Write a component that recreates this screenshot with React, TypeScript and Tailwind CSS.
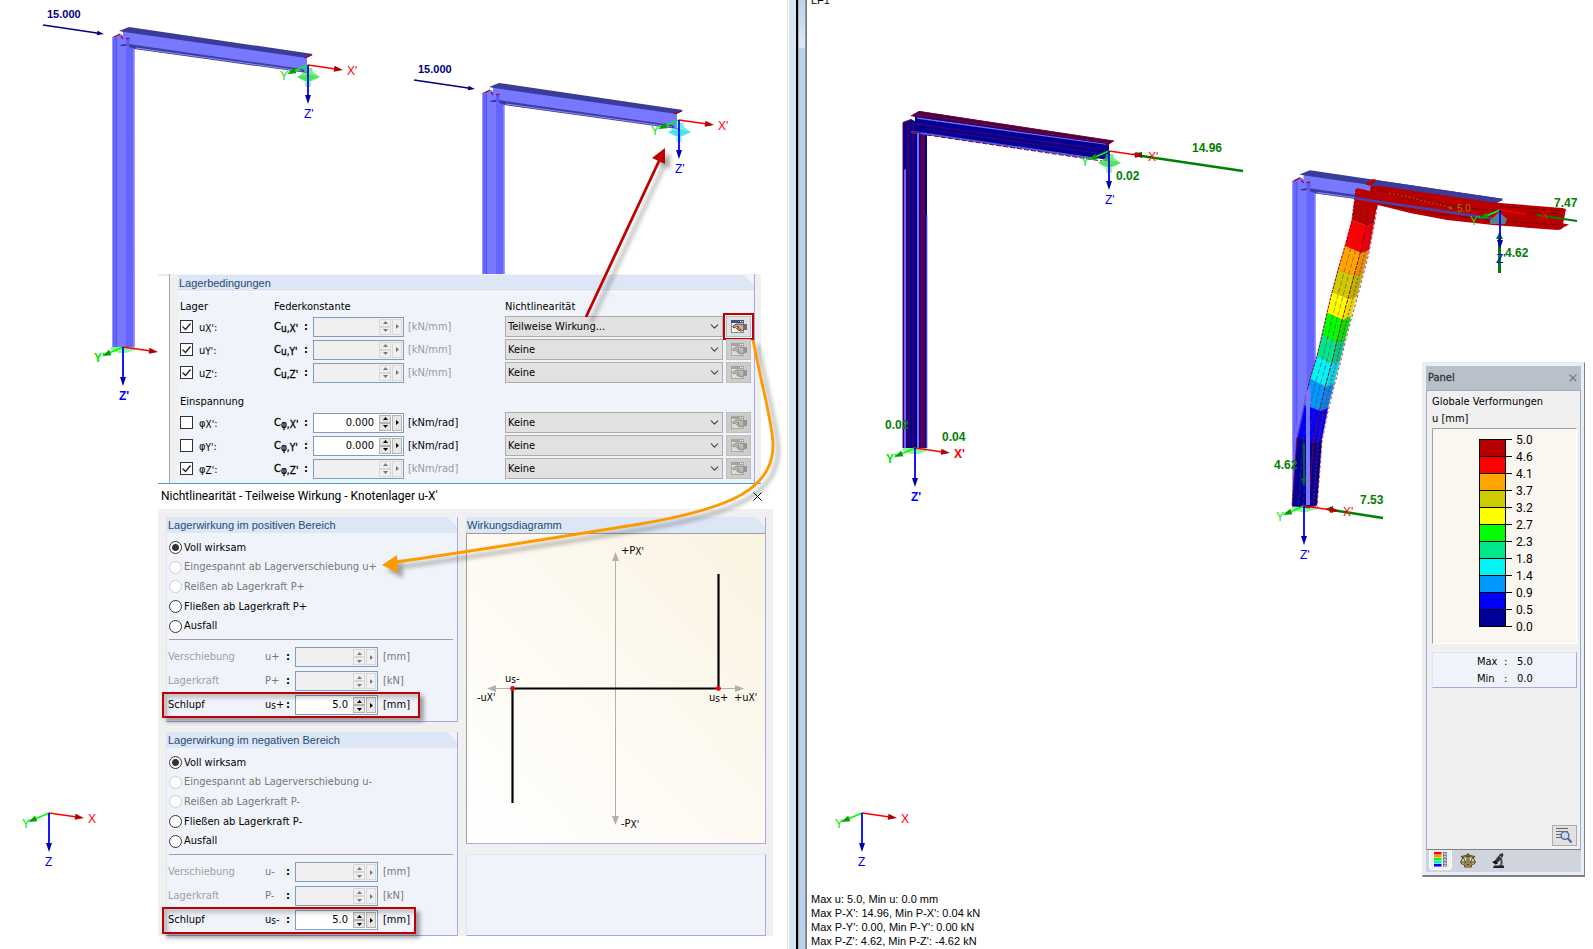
import React from 'react';
import { ChevronDown, X } from 'lucide-react';

const UI = "font-['DejaVu_Sans_Condensed','DejaVu_Sans',sans-serif]";
const ARIAL = "font-['Liberation_Sans',Arial,sans-serif]";

/* ---------- 3D scene parts ---------- */

function Arrow({ x, y, color, head, width = 1.6, size = 8 }: { x: number; y: number; color: string; head?: string; width?: number; size?: number }) {
  const len = Math.hypot(x, y);
  const ux = x / len;
  const uy = y / len;
  const bx = x - ux * size;
  const by = y - uy * size;
  const w = size * 0.33;
  return (
    <g>
      <line x1={0} y1={0} x2={bx} y2={by} stroke={color} strokeWidth={width} />
      <polygon points={`${x},${y} ${bx - uy * w},${by + ux * w} ${bx + uy * w},${by - ux * w}`} fill={head ?? color} />
    </g>
  );
}

type TriadProps = { x: number; y: number; prime?: boolean; hideX?: boolean; bold?: boolean; xDx?: number; xDy?: number; yDx?: number; yDy?: number };

function Triad({ x, y, prime = true, hideX, bold, xDx = 39, xDy = 10, yDx = -29, yDy = 15 }: TriadProps) {
  const p = prime ? "'" : '';
  const weight = bold ? 700 : 400;
  return (
    <g transform={`translate(${x} ${y})`} fontFamily="Liberation Sans, Arial, sans-serif" fontSize={12} fontWeight={weight}>
      <Arrow x={-21} y={9} color="#00ff00" head="#00a000" width={1.8} size={9} />
      <Arrow x={35} y={5} color="#ff0000" head="#b00000" width={1.6} size={9} />
      <Arrow x={0} y={39} color="#0000ff" head="#0000aa" width={1.8} size={9} />
      {!hideX && <text x={xDx} y={xDy} fill="#ff0000">X{p}</text>}
      <text x={yDx} y={yDy} fill="#00e600">Y{p}</text>
      <text x={-4} y={53} fill="#0000ff">Z{p}</text>
    </g>
  );
}

function Support({ x, y, color = '#33e04a' }: { x: number; y: number; color?: string }) {
  return (
    <g transform={`translate(${x} ${y})`} fill={color}>
      <polygon points="-3,3 4,3 5,7 12,12 4,16 -4,16 -11,12 -4,7" opacity={0.65} />
      <polygon points="-11,12 0,9 12,12 3,15 -4,15" opacity={0.6} />
      <rect x={-3} y={14} width={6} height={8} opacity={0.45} />
    </g>
  );
}

function BaseSupport({ x, y }: { x: number; y: number }) {
  return <polygon transform={`translate(${x} ${y})`} points="-12,0 12,0 12,3 3,6 -4,6 -12,3" fill="#66f07a" opacity={0.75} />;
}

function Frame({ x, y, scale = 1 }: { x: number; y: number; scale?: number }) {
  return (
    <g transform={`translate(${x} ${y}) scale(${scale})`}>
      <polygon points="0,37 9,34 14,38 22,43 22.5,347 0,347" fill="#7777ff" />
      <rect x={0} y={38} width={5} height={309} fill="#6666ff" />
      <rect x={14} y={45} width={8.5} height={302} fill="#6464ff" />
      <line x1={4.5} x2={4.5} y1={38} y2={347} stroke="#5555ee" />
      <line x1={0.5} x2={0.5} y1={38} y2={347} stroke="#9a9aff" />
      <line x1={22} x2={22} y1={48} y2={347} stroke="#a0a0ff" />
      <polygon points="11,31 195,57 195,72 23,49 17,46 11,46" fill="#7777ff" />
      <polygon points="17,44 23,45 190,69 195,73 23,49 17,47" fill="#3d3d9b" />
      <polyline points="24,48 190,71" stroke="#8c8cff" strokeWidth={1} fill="none" />
      <polygon points="7,31 17,27 201,54 195,58 12,32" fill="#3b3b99" />
      <polygon points="8,45 14,44 14,46 9,46" fill="#33338a" />
      <polygon points="14,39 18,38 17,46 14,46" fill="#5c5cf0" />
      <path d="M2 37 L8 34 M9 36 L11 39 M14 39 L17 38 M192 58 L200 55 M193 72 L196 73" stroke="#a00018" strokeWidth={1.3} fill="none" />
    </g>
  );
}

function LoadArrow({ x, y }: { x: number; y: number }) {
  return (
    <g transform={`translate(${x} ${y})`}>
      <Arrow x={61} y={9} color="#000080" width={1.6} size={7} />
      <text x={4} y={-7} fill="#000080" fontFamily="Liberation Sans, Arial, sans-serif" fontWeight={700} fontSize={11}>15.000</text>
    </g>
  );
}

function LeftScene() {
  return (
    <svg className="absolute left-0 top-0" width={787} height={949} viewBox="0 0 787 949">
      <LoadArrow x={43} y={25} />
      <BaseSupport x={123} y={347} />
      <Frame x={112} y={0} />
      <Support x={308} y={65} />
      <Triad x={308} y={65} yDx={-28} />
      <Triad x={123} y={347} bold hideX />
      <LoadArrow x={414} y={80} />
      <Frame x={482} y={56} />
      <Support x={679} y={120} color="#2ee0e6" />
      <Triad x={679} y={120} yDx={-28} />
      <Triad x={49} y={813} prime={false} yDx={-27} />
    </svg>
  );
}

const BANDS = ['#b90000', '#ff0000', '#ffa500', '#cccc00', '#ffff00', '#00ff00', '#00e68a', '#00f5f5', '#0099ff', '#0000ff', '#000099'];
const LEFT_EDGE = [[1356, 189], [1352, 220], [1345, 246], [1338, 270], [1332, 292], [1327, 313], [1322, 335], [1317, 356], [1310, 379], [1304, 405], [1297, 437], [1292, 506]];
const RIGHT_EDGE = [[1378, 202], [1374, 226], [1369, 253], [1363, 276], [1357, 299], [1351, 320], [1345, 343], [1340, 364], [1334, 387], [1328, 411], [1322, 442], [1317, 508]];

function edgeLine(t: number) {
  return LEFT_EDGE.map(([lx, ly], i) => {
    const [rx, ry] = RIGHT_EDGE[i];
    return `${lx + (rx - lx) * t},${ly + (ry - ly) * t}`;
  }).join(' ');
}

function DeformedFrame() {
  return (
    <g>
      {BANDS.map((color, i) => {
        const [ax, ay] = LEFT_EDGE[i];
        const [bx, by] = RIGHT_EDGE[i];
        const [cx, cy] = RIGHT_EDGE[i + 1];
        const [dx, dy] = LEFT_EDGE[i + 1];
        const m = ax + (bx - ax) * 0.68;
        const n = dx + (cx - dx) * 0.68;
        return (
          <g key={color}>
            <polygon points={`${ax},${ay} ${m},${by} ${bx},${by - 3} ${cx},${cy - 3} ${n},${cy} ${dx},${dy}`} fill={color} />
            <polygon points={`${m},${by} ${bx},${by - 3} ${cx},${cy - 3} ${n},${cy}`} fill="#500050" opacity={i === 0 ? 0 : 0.15} />
            <polyline points={`${dx},${dy} ${n},${cy} ${cx},${cy - 3}`} fill="none" stroke="#600000" strokeWidth={0.6} opacity={0.6} />
          </g>
        );
      })}
      <polyline points={edgeLine(0)} fill="none" stroke="#900020" strokeWidth={1} strokeDasharray="3 1" />
      <polyline points={edgeLine(0.25)} fill="none" stroke="#703040" strokeWidth={0.5} strokeDasharray="5 2" />
      <polyline points={edgeLine(0.45)} fill="none" stroke="#703040" strokeWidth={0.5} strokeDasharray="5 2" />
      <polyline points={edgeLine(0.66)} fill="none" stroke="#900020" strokeWidth={1} strokeDasharray="4 1" />
      <polyline points={edgeLine(0.84)} fill="none" stroke="#703050" strokeWidth={0.8} strokeDasharray="2 2" />
      <polyline points={edgeLine(1)} fill="none" stroke="#900020" strokeWidth={0.7} strokeDasharray="3 2" />
      <polygon points="1292,440 1304,400 1311,386 1311,404 1305,405 1298,437" fill="#7777ff" opacity={0.5} />
      <polygon points="1306,392 1310,386 1310,505 1306,505" fill="#7777ff" />
      <polygon points="1357,188 1370,191 1371,184 1500,203 1562,208 1566,209 1562,229 1557,230 1493,225 1447,220 1410,213 1378,205 1376,210 1355,206" fill="#b90000" />
      <path d="M1371 187 C1420 204 1470 211 1562 214 M1500 206 L1562 211 M1376 202 C1410 212 1470 219 1560 225" stroke="#7d0000" strokeWidth={1} fill="none" />
      <polygon points="1370,186 1376,180 1503,199 1497,203 1380,186" fill="#3b3b99" />
      <polygon points="1365,184 1373,179 1377,180 1370,186" fill="#c00000" />
      <polyline points="1354,198 1380,202 1496,219" stroke="#4c3fa8" strokeWidth={2.6} fill="none" />
      <path d="M1389 193 L1450 207" stroke="#a07000" strokeWidth={1} strokeDasharray="2 2" />
      <path d="M1448 208 l4 -2 v4z" fill="#608000" />
      <text x={1457} y={212} fill="#9a8000" fontFamily="Liberation Sans, Arial, sans-serif" fontSize={10}>5.0</text>
      <polyline points="1562,208 1561,217 1561,224 1566,225 1558,229" fill="none" stroke="#b90000" strokeWidth={2} />
    </g>
  );
}

function ResultFrame() {
  return (
    <g>
      <polygon points="903,122 911,119 918,123 927,130 927,448 903,448" fill="#000099" />
      <polygon points="904,170 907,168 906,448 904,448" fill="#6666ff" />
      <rect x={906} y={125} width={2} height={323} fill="#2a007a" />
      <rect x={917} y={125} width={2} height={323} fill="#6f6fff" />
      <rect x={921} y={126} width={4} height={322} fill="#5c0050" />
      <path d="M903 123 V448 M909 120 V446 M913 122 V448 M920 124 V448" stroke="#660040" strokeWidth={1} />
      <path d="M927 215 V448" stroke="#7777ff" strokeWidth={1} />
      <polygon points="915,116 1109,143 1109,160 927,134 915,131" fill="#000099" />
      <path d="M917 118 L1106 144" stroke="#6f6fff" strokeWidth={1.6} />
      <path d="M916 124 L1106 150 M925 129 L1104 154" stroke="#4c0060" strokeWidth={1} />
      <path d="M911 132 L927 134 L1090 158" stroke="#5a5ae0" strokeWidth={2} fill="none" />
      <path d="M927 135 L1102 161" stroke="#700030" strokeWidth={1} strokeDasharray="5 2" />
      <polygon points="911,116 919,111 1114,141 1107,144 915,117" fill="#3a0058" />
      <path d="M911 116 L919 111.5 L1114 141 M916 114 L1110 143" stroke="#80002c" strokeWidth={1} fill="none" />
      <path d="M1106 146 L1113 141 M1103 160 L1110 161 M911 132 L921 133" stroke="#900018" strokeWidth={1.2} />
      <path d="M918 124 H922 M903 124 L911 120" stroke="#900018" strokeWidth={1} />
    </g>
  );
}

function RightScene() {
  return (
    <svg className="absolute left-0 top-0" width={786} height={949} viewBox="807 0 786 949">
      <text x={811} y={4} fontFamily="Liberation Sans, Arial, sans-serif" fontSize={11}>LF1</text>
      <BaseSupport x={915} y={448} />
      <ResultFrame />
      <Support x={1109} y={151} />
      <line x1={1135} y1={155} x2={1243} y2={171} stroke="#008000" strokeWidth={2.4} />
      <polygon points="1131,154 1142,152 1142,158" fill="#006000" />
      <Triad x={1109} y={151} yDx={-28} />
      <Triad x={915} y={448} bold />
      <BaseSupport x={1304} y={506} />
      <Frame x={1292} y={142} scale={1.05} />
      <DeformedFrame />
      <polygon points="1499,212 1507,219 1505,224 1490,224 1490,220" fill="#5f7f86" />
      <path d="M1537 215 L1577 221" stroke="#008000" strokeWidth={2.2} />
      <path d="M1304 443 V483" stroke="#006838" strokeWidth={1.8} />
      <polygon points="1304,487 1301,478 1306,478" fill="#006838" />
      <line x1={1332} y1={510} x2={1383} y2={518} stroke="#008000" strokeWidth={2.4} />
      <polygon points="1325,509 1333,506 1333,513" fill="#006000" />
      <path d="M1499.500 238 V273" stroke="#008000" strokeWidth={3} />
      <polygon points="1499.500,232 1496,239 1503,239" fill="#008000" />
      <Triad x={1500} y={210} xDx={40} yDx={-30} />
      <Triad x={1304} y={506} yDx={-28} />
      <Triad x={862} y={813} prime={false} yDx={-27} />
      <g fill="#008000" fontFamily="Liberation Sans, Arial, sans-serif" fontWeight={700} fontSize={12}>
        <text x={1192} y={152}>14.96</text>
        <text x={1116} y={180}>0.02</text>
        <text x={885} y={429}>0.02</text>
        <text x={942} y={441}>0.04</text>
        <text x={1554} y={207}>7.47</text>
        <text x={1505} y={257}>4.62</text>
        <text x={1274} y={469}>4.62</text>
        <text x={1360} y={504}>7.53</text>
      </g>
    </svg>
  );
}

/* ---------- form controls ---------- */

function Sym({ base, sub, tail = '' }: { base: string; sub: string; tail?: string }) {
  return <span>{base}<span className="align-[-1px] text-[10px] leading-none">{sub}</span>{tail}</span>;
}

function Spinner({ value = '', disabled, label, className }: { value?: string; disabled?: boolean; label: string; className: string }) {
  const tone = disabled ? 'fill-[#777]' : 'fill-black';
  const btn = disabled ? 'bg-[#f0f0f0] border-[#d8d8d8]' : 'bg-[#e6e6e6] border-[#b4b4b4]';
  return (
    <div className={`flex h-5 gap-px border border-[#7f9db9] p-px ${disabled ? 'bg-[#f0f0f0]' : 'bg-white'} ${className}`}>
      <input aria-label={label} defaultValue={value} disabled={disabled} className="w-0 min-w-0 flex-1 bg-transparent pr-1 text-right outline-none" />
      <div className="flex w-3 flex-col">
        <button type="button" disabled={disabled} aria-label={`${label} +`} className={`grid flex-1 place-items-center border ${btn}`}>
          <svg width={5} height={3} className={tone}><path d="M2.500 0 L5 3 H0z" /></svg>
        </button>
        <button type="button" disabled={disabled} aria-label={`${label} -`} className={`grid flex-1 place-items-center border ${btn}`}>
          <svg width={5} height={3} className={tone}><path d="M0 0 H5 L2.500 3z" /></svg>
        </button>
      </div>
      <button type="button" disabled={disabled} aria-label={`${label} …`} className={`grid w-[10px] place-items-center border ${btn}`}>
        <svg width={3} height={5} className={tone}><path d="M0 0 L3 2.500 L0 5z" /></svg>
      </button>
    </div>
  );
}

function EditIcon({ active }: { active?: boolean }) {
  const bar = active ? '#3b5488' : '#a4a59f';
  const hand = active ? '#dba880' : '#b9bab2';
  const line = active ? '#40342e' : '#85867f';
  return (
    <svg width={16} height={14} viewBox="0 0 16 14">
      <rect x={0.5} y={0.5} width={12} height={12} fill={active ? '#f4f4f4' : '#dcddd6'} stroke={active ? '#888' : '#a9aaa4'} />
      <rect x={0} y={0} width={13} height={3} fill={bar} />
      <rect x={9} y={1} width={1} height={1} fill="#fff" />
      <rect x={11} y={1} width={1} height={1} fill="#fff" />
      <path d="M1.500 6.500 L5 4 H9 L13 4.500 V9.500 L10.500 11 L7 10 L5.500 8.500 L8 7 L5.500 6.500 L3 8z" fill={hand} stroke={line} strokeWidth={0.9} />
      <path d="M7.500 8.500 L10 9.500" stroke={line} strokeWidth={0.7} />
      <rect x={12.5} y={4} width={3.500} height={6} fill={active ? '#66707f' : '#94958e'} />
    </svg>
  );
}

type RowProps = { base: string; axis: string; checked: boolean; value?: string; unit: string; effect: string; active?: boolean };

function ConditionRow({ base, axis, checked, value, unit, effect, active }: RowProps) {
  const id = `${base}${axis}`;
  const off = value === undefined;
  return (
    <div className="flex h-[23px] items-center">
      <label className="flex w-[94px] items-center gap-[6px]">
        <span className="grid">
          <input type="checkbox" defaultChecked={checked} className="peer size-[13px] appearance-none border border-[#333] bg-white [grid-area:1/1]" />
          <svg width={13} height={13} className="pointer-events-none opacity-0 [grid-area:1/1] peer-checked:opacity-100"><path d="M2.500 6.500 L5.500 9.500 L10.500 3.500" fill="none" stroke="#222" strokeWidth={1.3} /></svg>
        </span>
        <span className="pt-[2px]"><Sym base={base} sub={`${axis}'`} tail=":" /></span>
      </label>
      <span className="flex w-[39px] pr-[5px] font-bold">
        <span className="font-normal [-webkit-text-stroke:0.3px]">C<span className="align-[-2px] text-[10px] leading-none">{base},{axis}'</span></span>
        <span className="ml-auto">:</span>
      </span>
      <Spinner label={`C ${id}`} value={value} disabled={off} className="w-[91px]" />
      <span className={`w-[101px] pl-[4px] ${off ? 'text-[#9a9a9a]' : ''}`}>{unit}</span>
      <div className="relative min-w-0 flex-1">
        <select aria-label={`Nichtlinearität ${id}`} defaultValue={effect} className="block h-[21px] w-full appearance-none border border-[#adadad] bg-[#e1e1e1] pl-[2px]">
          <option>{effect}</option>
        </select>
        <ChevronDown className="pointer-events-none absolute right-[2px] top-[4px] size-[13px]" strokeWidth={2} color="#444" />
      </div>
      <button type="button" aria-label={`Bearbeiten ${id}`} className={`ml-[3px] mr-[3px] grid h-[21px] w-[25px] place-items-center border border-[#bfbfbf] ${active ? 'bg-[#e1e1e1] outline-2 outline-offset-[1px] outline-[#c00000]' : 'bg-[#ccc]'}`}>
        <EditIcon active={active} />
      </button>
    </div>
  );
}

function GroupTitle({ children }: { children: React.ReactNode }) {
  return (
    <h2 className={`${ARIAL} flex h-4 items-center bg-[#dce6f5] pl-px text-[11px] text-[#264a73] [clip-path:polygon(0_0,calc(100%-10px)_0,100%_10px,100%_100%,0_100%)]`}>{children}</h2>
  );
}

function SupportConditions() {
  return (
    <section className={`${UI} flex h-[210px] border-b border-[#3aa0e0] bg-white text-[11px] leading-[14px]`}>
      <div className="w-[11px] border-t-2 border-[#e8ebf0]" />
      <div className="flex flex-1 border-l border-[#a8a8a8] bg-[#f0f0f0] pl-2 pr-[6px]">
        <div className="flex-1 border-r border-[#a9a7e8] bg-[#f0f4fa] pt-px">
          <GroupTitle>Lagerbedingungen</GroupTitle>
          <div className="border-t border-white pl-[2px]">
            <div className="flex h-[23px] items-end pb-px">
              <span className="w-[94px]">Lager</span>
              <span className="w-[231px]">Federkonstante</span>
              <span>Nichtlinearität</span>
            </div>
            <ConditionRow base="u" axis="X" checked unit="[kN/mm]" effect="Teilweise Wirkung..." active />
            <ConditionRow base="u" axis="Y" checked unit="[kN/mm]" effect="Keine" />
            <ConditionRow base="u" axis="Z" checked unit="[kN/mm]" effect="Keine" />
            <div className="flex h-[27px] items-end pb-[2px]">Einspannung</div>
            <ConditionRow base="φ" axis="X" checked={false} value="0.000" unit="[kNm/rad]" effect="Keine" />
            <ConditionRow base="φ" axis="Y" checked={false} value="0.000" unit="[kNm/rad]" effect="Keine" />
            <ConditionRow base="φ" axis="Z" checked unit="[kNm/rad]" effect="Keine" />
          </div>
        </div>
      </div>
    </section>
  );
}

function RangeGroup({ title, sign, name, className, mark }: { title: string; sign: string; name: string; className: string; mark: string }) {
  const options: [string, boolean][] = [
    ['Voll wirksam', false],
    [`Eingespannt ab Lagerverschiebung u${sign}`, true],
    [`Reißen ab Lagerkraft P${sign}`, true],
    [`Fließen ab Lagerkraft P${sign}`, false],
    ['Ausfall', false],
  ];
  return (
    <fieldset className={`border-b border-r border-l border-b-[#a9a7e8] border-l-[#dce6f5] border-r-[#a9a7e8] bg-[#f0f4fa] ${className}`}>
      <GroupTitle>{title}</GroupTitle>
      <div className="mt-[5px] grid h-[98px] auto-rows-fr pl-[2px]">
        {options.map(([text, off], i) => (
          <label key={text} className={`flex items-center gap-[2px] ${off ? 'text-[#777]' : ''}`}>
            <input type="radio" name={name} disabled={off} defaultChecked={i === 0} className="size-[13px] appearance-none rounded-full border border-[#333] bg-white checked:bg-[radial-gradient(circle,#333_3px,white_4px)] disabled:border-[#ccc]" />
            {text}
          </label>
        ))}
      </div>
      <div className="mb-[5px] ml-[2px] mr-1 mt-[3px] h-px bg-[#a0a0a0]" />
      <ValueRow label="Verschiebung" symbol={<>u{sign}</>} unit="[mm]" />
      <ValueRow label="Lagerkraft" symbol={<>P{sign}</>} unit="[kN]" />
      <ValueRow label="Schlupf" symbol={<Sym base="u" sub="s" tail={sign} />} unit="[mm]" value="5.0" mark={mark} />
    </fieldset>
  );
}

function ValueRow({ label, symbol, unit, value, mark }: { label: string; symbol: React.ReactNode; unit: string; value?: string; mark?: string }) {
  const off = value === undefined;
  return (
    <div className={`relative flex h-6 items-center pl-[1px] ${off ? 'text-[#a0a0a0]' : ''}`}>
      <span className="w-[97px]">{label}</span>
      <span className={`flex w-[30px] pr-[5px] ${off ? 'text-[#777]' : ''}`}>{symbol}<span className="ml-auto font-bold text-black">:</span></span>
      <Spinner label={label} value={value} disabled={off} className="w-[83px]" />
      <span className={`pl-[5px] ${off ? 'text-[#777]' : ''}`}>{unit}</span>
      {mark && <span className={`pointer-events-none absolute -left-[5px] border-2 border-[#c00000] shadow-[4px_4px_4px_rgba(0,0,0,0.35),inset_4px_4px_4px_rgba(0,0,0,0.2)] ${mark}`} />}
    </div>
  );
}

function EffectDiagram() {
  return (
    <svg className="block h-full w-full" viewBox="0 0 298 309" fontFamily="DejaVu Sans Condensed, DejaVu Sans, sans-serif" fontSize={11}>
      <g stroke="#b0b0b0" fill="#b0b0b0">
        <line x1={148.5} y1={24} x2={148.5} y2={286} />
        <line x1={26} y1={154.5} x2={272} y2={154.5} />
        <path stroke="none" d="M148.500 18 l-3.500 9 h7z M148.500 291 l-3.500 -9 h7z M20 154.500 l9 -3.500 v7z M277 154.500 l-9 -3.500 v7z" />
      </g>
      <path d="M45.500 269 V154.500 H251.500 V40" fill="none" stroke="#000" strokeWidth={2.2} />
      <circle cx={45.5} cy={154.5} r={2.4} fill="#f00" />
      <circle cx={251.5} cy={154.5} r={2.4} fill="#f00" />
      <text x={154} y={20}>+P<tspan fontSize={10} dy={1}>X'</tspan></text>
      <text x={154} y={293}>-P<tspan fontSize={10} dy={1}>X'</tspan></text>
      <text x={38} y={148}>u<tspan fontSize={10} dy={1}>s</tspan><tspan dy={-1}>-</tspan></text>
      <text x={10} y={167}>-u<tspan fontSize={10}>X'</tspan></text>
      <text x={242} y={167}>u<tspan fontSize={10} dy={1}>s</tspan><tspan dy={-1}>+</tspan></text>
      <text x={267} y={167}>+u<tspan fontSize={10}>X'</tspan></text>
    </svg>
  );
}

function NonlinearityDialog() {
  return (
    <section className={`${UI} bg-[#f0f0f0] text-[11px] leading-[14px]`}>
      <header className="flex h-[25px] items-center bg-white pl-[3px] pr-2 pb-px">
        <h1 className="font-['Roboto','Open_Sans',sans-serif] text-[12px]">Nichtlinearität - Teilweise Wirkung - Knotenlager u-X'</h1>
        <button type="button" aria-label="Schließen" className="ml-auto"><X size={15} strokeWidth={1.6} /></button>
      </header>
      <div className="flex gap-2 px-2 pt-2 pr-[7px]">
        <div className="flex w-[292px] flex-col gap-[10px]">
          <RangeGroup title="Lagerwirkung im positiven Bereich" sign="+" name="positive" className="h-[205px]" mark="-inset-y-px w-[258px]" />
          <RangeGroup title="Lagerwirkung im negativen Bereich" sign="-" name="negative" className="h-[204px]" mark="-top-px -bottom-[2px] w-[254px]" />
        </div>
        <div className="flex flex-1 flex-col gap-[10px]">
          <div className="flex flex-1 flex-col border-b border-r border-[#a9a7e8]">
            <GroupTitle>Wirkungsdiagramm</GroupTitle>
            <div className="h-[310px] flex-1 border-l border-t border-[#a0a0a0] bg-linear-to-tr from-white via-[#fefaf2] to-[#f9f3e0]"><EffectDiagram /></div>
          </div>
          <div className="h-[82px] border border-b-[#a9a7e8] border-l-[#dce6f5] border-r-[#a9a7e8] border-t-[#dce6f5] bg-[#f0f4fa]" />
        </div>
      </div>
    </section>
  );
}

function Callouts() {
  return (
    <svg className="pointer-events-none absolute left-0 top-0 drop-shadow-[5px_5px_2px_rgba(0,0,0,0.35)]" width={787} height={949} viewBox="0 0 787 949">
      <path d="M586 317 L659 161" stroke="#c00000" strokeWidth={2.8} />
      <polygon points="665,148 652,158 665,164" fill="#c00000" />
      <path d="M753 340 C763 392 773 425 773 445 C773 487 735 508 640 524 C560 537 480 550 396 562" fill="none" stroke="#ff9900" strokeWidth={2.8} />
      <polygon points="382,565 397,555 398,573" fill="#ff9900" />
    </svg>
  );
}

/* ---------- result panel ---------- */

const SCALE = ['5.0', '4.6', '4.1', '3.7', '3.2', '2.7', '2.3', '1.8', '1.4', '0.9', '0.5', '0.0'];

function ColorScale() {
  return (
    <div className="flex h-[216px] border border-b-white border-l-[#a0a0a0] border-r-white border-t-[#a0a0a0] bg-[#faf7f0] pl-[46px] pt-[10px]">
      <div className="h-[188px] w-[27px] border border-b-0 border-black">
        {BANDS.map((c) => <div key={c} className="h-[17px] border-b border-black" style={{ backgroundColor: c }} />)}
      </div>
      <div className="-mt-[8px]">
        {SCALE.map((v) => (
          <div key={v} className="flex h-[17px] items-center gap-1 text-[12px]"><span className="h-px w-[6px] bg-black" /><span className="font-['Roboto',sans-serif]">{v}</span></div>
        ))}
      </div>
    </div>
  );
}

function ScalesIcon() {
  return (
    <svg width={16} height={15} viewBox="0 0 16 15" stroke="#4a3c10" strokeWidth={0.9} fill="#d8b84a">
      <path d="M7 1 h2 v11 h-2z" />
      <path d="M1 3.500 Q8 0.500 15 3.500 L14 4.500 Q8 2 2 4.500z" />
      <path d="M3 4 L0.800 9 M3 4 L5.500 9 M13 4 L10.500 9 M13 4 L15.200 9" fill="none" />
      <path d="M0.500 9 h5.500 q-1 2.500 -2.800 2.500 T0.500 9z M10 9 h5.500 q-1 2.500 -2.800 2.500 T10 9z M4.500 12 h7 v2 h-7z" />
    </svg>
  );
}

function MicroscopeIcon() {
  return (
    <svg width={15} height={16} viewBox="0 0 15 16" fill="#222">
      <path d="M9 1 L11.500 0 L12.500 2 L10.500 6 L6 10 L3.500 8z" fill="#333" />
      <path d="M1 9 L4.500 7.500 L7 10.500 L4.500 11.500z" fill="#111" />
      <path d="M10.500 5 Q13 9 10.500 13 H8 Q10.500 9 9 7z" fill="#555" />
      <path d="M3 12.500 H13 V15 H2z" />
      <path d="M8.500 3 L10.500 4.500" stroke="#bbb" strokeWidth={1} />
    </svg>
  );
}

function ResultPanel() {
  return (
    <aside className={`${UI} absolute right-2 top-[362px] flex h-[515px] w-[163px] flex-col border border-b-2 border-b-[#808080] border-l-[#e4ebf4] border-r-[#808080] border-t-[#e4ebf4] bg-[#e9eff7] p-[3px] text-[11px] leading-[14px]`}>
      <header className="flex h-6 items-center justify-between bg-[#b9c0cc] pl-[2px] pr-[2px]">
        <h2 className="text-[#333] [-webkit-text-stroke:0.3px]">Panel</h2>
        <button type="button" aria-label="Panel schließen"><X size={12} strokeWidth={2.2} color="#777" /></button>
      </header>
      <div className="flex flex-1 flex-col border-x border-t border-b border-[#a3abb8] border-b-[#808080] bg-[#f0f0f0] pl-[5px] pr-[3px]">
        <p className="pb-[3px] pt-1">Globale Verformungen</p>
        <p className="mb-[2px]">u [mm]</p>
        <ColorScale />
        <dl className="mt-2 grid h-9 grid-cols-[61px_13px_1fr] content-center gap-y-[3px] border border-b-[#a9a7e8] border-l-[#dce6f5] border-r-[#a9a7e8] border-t-[#dce6f5] bg-[#f0f4fa] pl-[2px]">
          <dt className="col-start-1 pl-[42px]">Max</dt><dd className="pl-2">:</dd><dd className="pl-2">5.0</dd>
          <dt className="col-start-1 pl-[42px]">Min</dt><dd className="pl-2">:</dd><dd className="pl-2">0.0</dd>
        </dl>
        <button type="button" aria-label="Details" className="mb-[3px] ml-auto mt-auto grid h-[21px] w-[25px] place-items-center border border-[#adadad] bg-[#e1e1e1]">
          <svg width={17} height={17} viewBox="0 0 17 17">
            <path d="M0 1.500 H12 M0 4.500 H12 M0 7.500 H5 M0 10.500 H6" stroke="#666" strokeWidth={1.2} />
            <circle cx={9} cy={8.5} r={3.9} fill="#c9dcf7" stroke="#52699c" strokeWidth={1.4} />
            <path d="M12 11.500 L15.500 15.500" stroke="#52699c" strokeWidth={2.2} />
          </svg>
        </button>
      </div>
      <nav className="flex h-[22px] items-start bg-[#d0d4de] pl-[3px]">
        <button type="button" aria-label="Farbskala" className="grid h-5 w-[23px] place-items-center rounded-b border border-t-0 border-white bg-[#eef0f3]">
          <svg width={14} height={15} viewBox="0 0 14 15">
            {['#ff0000', '#ff9900', '#00ff00', '#00e5ff', '#0000ff'].map((c, i) => (
              <g key={c}>
                <rect x={0} y={i * 3} width={7.500} height={2.500} fill={c} />
                <rect x={9.5} y={i * 3 + 0.5} width={3} height={1.600} fill="#fff" stroke="#666" strokeWidth={0.8} />
              </g>
            ))}
          </svg>
        </button>
        <button type="button" aria-label="Faktoren" className="ml-[8px] mt-[3px]"><ScalesIcon /></button>
        <button type="button" aria-label="Filter" className="ml-[15px] mt-[3px]"><MicroscopeIcon /></button>
      </nav>
    </aside>
  );
}

export default function App() {
  return (
    <main className="grid h-screen min-h-[949px] grid-cols-[787fr_20px_786fr] overflow-hidden bg-white text-black">
      <div className="relative overflow-hidden">
        <LeftScene />
        <div className="absolute left-[158px] top-[274px] w-[603px]"><SupportConditions /></div>
        <div className="absolute left-[158px] top-[484px] w-[615px]"><NonlinearityDialog /></div>
        <Callouts />
      </div>
      <div className="flex">
        <div className="w-px bg-[#e3e3e3]" />
        <div className="w-px" />
        <div className="w-[7px] bg-[#d8e4f1]" />
        <div className="w-[2px] bg-black" />
        <div className="w-px bg-[#b0b0b0]" />
        <div className="w-[6px] bg-[#b9d1ea]">
          <div className="h-12 bg-linear-to-b from-[#bcd2ea] to-[#dce8f6]" />
        </div>
        <div className="w-px bg-[#8a9aac]" />
        <div className="w-px bg-[#777]" />
      </div>
      <div className="relative overflow-hidden">
        <RightScene />
        <div className={`${ARIAL} absolute left-[4px] top-[892px] text-[11px] leading-[14px]`}>
          <p>Max u: 5.0, Min u: 0.0 mm</p>
          <p>Max P-X': 14.96, Min P-X': 0.04 kN</p>
          <p>Max P-Y': 0.00, Min P-Y': 0.00 kN</p>
          <p>Max P-Z': 4.62, Min P-Z': -4.62 kN</p>
        </div>
        <ResultPanel />
      </div>
    </main>
  );
}
